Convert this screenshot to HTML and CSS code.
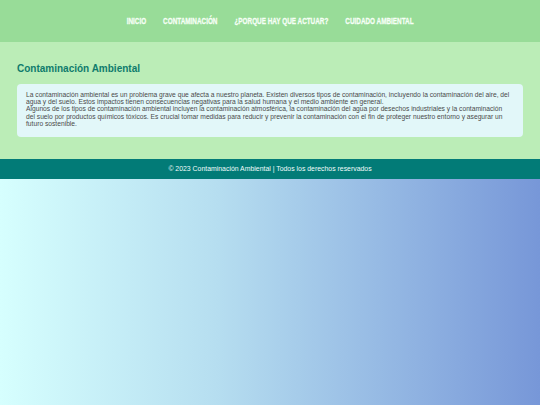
FILE: index.html
```html
<!DOCTYPE html>
<html lang="es">
<head>
<meta charset="utf-8">
<title>Contaminación Ambiental</title>
<link rel="stylesheet" href="styles.css">
</head>
<body>
<header class="site-header">
  <nav class="nav">
    <a class="nav-link" href="#">INICIO</a>
    <a class="nav-link" href="#">CONTAMINACIÓN</a>
    <a class="nav-link" href="#">¿PORQUE HAY QUE ACTUAR?</a>
    <a class="nav-link" href="#">CUIDADO AMBIENTAL</a>
  </nav>
</header>
<main class="main">
  <h2 class="title">Contaminación Ambiental</h2>
  <div class="card">
    <p class="card-text">La contaminación ambiental es un problema grave que afecta a nuestro planeta. Existen diversos tipos de contaminación, incluyendo la contaminación del aire, del agua y del suelo. Estos impactos tienen consecuencias negativas para la salud humana y el medio ambiente en general.</p>
    <p class="card-text">Algunos de los tipos de contaminación ambiental incluyen la contaminación atmosférica, la contaminación del agua por desechos industriales y la contaminación del suelo por productos químicos tóxicos. Es crucial tomar medidas para reducir y prevenir la contaminación con el fin de proteger nuestro entorno y asegurar un futuro sostenible.</p>
  </div>
</main>
<footer class="footer">
  <p class="footer-text">© 2023 Contaminación Ambiental | Todos los derechos reservados</p>
</footer>
</body>
</html>
```
FILE: styles.css
```css
html, body {
  margin: 0;
  padding: 0;
}
body {
  background: linear-gradient(to right, #d6fffe 0%, #b6def0 40%, #7797d8 100%);
  font-family: "Liberation Sans", Arial, sans-serif;
}
.site-header {
  background: #98dc98;
  height: 42px;
  display: flex;
  align-items: center;
  justify-content: center;
}
.nav {
  display: flex;
  gap: 25.4px;
  margin-top: -2px;
  transform: scale(0.67, 1);
}
.nav-link {
  font-family: "Liberation Sans", Arial, sans-serif;
  font-weight: bold;
  font-size: 9.5px;
  color: #f6fff6;
  text-decoration: none;
  white-space: nowrap;
  -webkit-text-stroke: 0.3px #f6fff6;
}
.main {
  background: #bbedb7;
  padding: 21px 17px 22px;
}
.title {
  margin: 0 0 9px;
  font-size: 10px;
  line-height: 11.5px;
  font-weight: bold;
  color: #0f7b6c;
}
.card {
  background: #e2f7f9;
  border-radius: 4px;
  padding: 7px 12px 9px 9px;
}
.card-text {
  margin: 0;
  font-size: 6.7px;
  line-height: 7.45px;
  color: #4a4a4a;
}
.footer {
  background: #027b77;
  height: 20px;
  display: flex;
  align-items: center;
  justify-content: center;
  box-shadow: 0 1px 0 #2e9290;
}
.footer-text {
  margin: 0;
  font-size: 6.9px;
  color: #f2fbfb;
}
```
